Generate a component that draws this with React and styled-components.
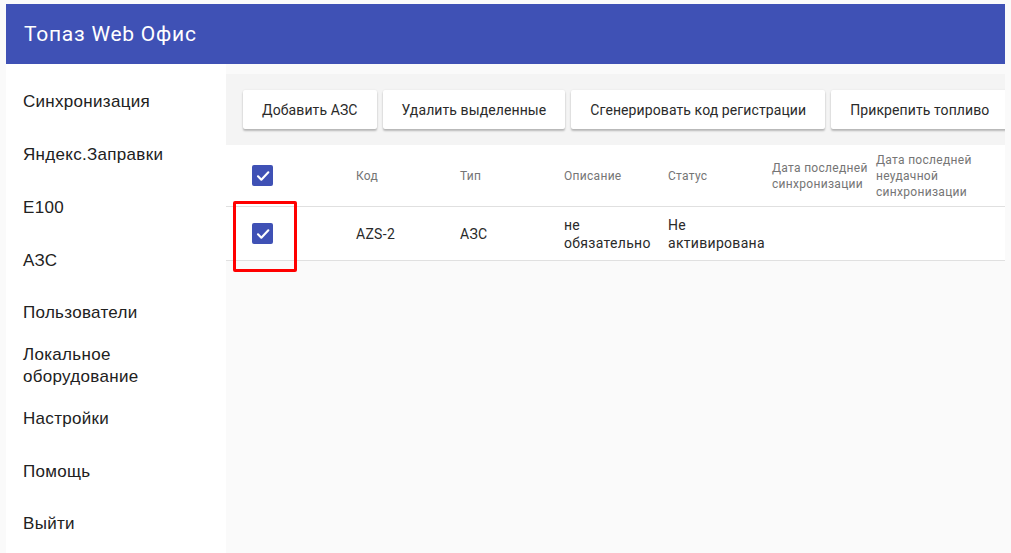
import React from "react";
import styled, { createGlobalStyle } from "styled-components";

const GlobalStyle = createGlobalStyle`
  html, body {
    margin: 0;
    padding: 0;
    background: #fafafa;
    font-family: Roboto, "Liberation Sans", sans-serif;
  }
  * { box-sizing: border-box; }
`;

const Page = styled.div`
  height: 553px;
  padding: 4px 6px 0;
  display: flex;
  flex-direction: column;
  overflow: hidden;
`;

const Header = styled.header`
  height: 60px;
  flex-shrink: 0;
  background: #3f51b5;
  color: #fff;
  display: flex;
  align-items: center;
  padding-left: 18px;
  font-size: 21px;
  letter-spacing: 0.75px;
  font-family: Roboto, sans-serif;
`;

const Body = styled.div`
  flex: 1;
  display: flex;
  min-height: 0;
`;

const Sidebar = styled.nav`
  width: 220px;
  flex-shrink: 0;
  background: #fff;
  padding-top: 12px;
`;

const NavItem = styled.div`
  height: 52.75px;
  display: flex;
  align-items: center;
  padding-left: 17px;
  font-family: "Liberation Sans", Arial, sans-serif;
  font-size: 17px;
  letter-spacing: 0.3px;
  line-height: 22px;
  color: #212121;
  white-space: pre-line;
`;

const Main = styled.main`
  flex: 1;
  padding-top: 10px;
  position: relative;
`;

const Toolbar = styled.div`
  background: #f4f4f4;
  height: 71px;
  padding: 16px 0 0 17px;
  display: flex;
  gap: 6px;
  overflow: hidden;
`;

const Button = styled.button`
  height: 39px;
  flex-shrink: 0;
  padding: 0 19px;
  background: #fff;
  border: none;
  border-radius: 2px;
  box-shadow: 0 2px 2px rgba(0, 0, 0, 0.24), 0 0 2px rgba(0, 0, 0, 0.08);
  font-family: Roboto, sans-serif;
  font-size: 14px;
  letter-spacing: 0.1px;
  color: #2a2a2a;
`;

const Table = styled.div`
  background: #fff;
`;

const Row = styled.div`
  display: grid;
  grid-template-columns: 130px repeat(6, 104px) 1fr;
  align-items: center;
  height: ${(p) => p.$h}px;
  border-bottom: 1px solid #e0e0e0;
`;

const HeadCell = styled.div`
  font-size: 12px;
  line-height: 16px;
  letter-spacing: 0.3px;
  color: #757575;
  padding-right: 2px;
`;

const Cell = styled.div`
  font-size: 14px;
  line-height: 18px;
  letter-spacing: 0.3px;
  color: #2a2a2a;
  padding-right: 8px;
`;

const CheckCell = styled.div`
  padding-left: 26px;
  display: flex;
`;

const Box = styled.div`
  width: 21px;
  height: 21px;
  border-radius: 2px;
  background: #3f51b5;
  display: flex;
  align-items: center;
  justify-content: center;
`;

const Highlight = styled.div`
  position: absolute;
  left: 7px;
  top: 137px;
  width: 64px;
  height: 71px;
  border: 3px solid #ff0000;
  border-radius: 2px;
  pointer-events: none;
`;

const Check = () => (
  <Box>
    <svg width="16" height="16" viewBox="0 0 24 24">
      <path
        d="M4.5 12.5l5 5L20 6.5"
        fill="none"
        stroke="#fff"
        strokeWidth="3.2"
        strokeLinecap="round"
        strokeLinejoin="round"
      />
    </svg>
  </Box>
);

const navItems = [
  "Синхронизация",
  "Яндекс.Заправки",
  "Е100",
  "АЗС",
  "Пользователи",
  "Локальное\nоборудование",
  "Настройки",
  "Помощь",
  "Выйти",
];

const buttons = [
  "Добавить АЗС",
  "Удалить выделенные",
  "Сгенерировать код регистрации",
  "Прикрепить топливо",
];

const heads = [
  "Код",
  "Тип",
  "Описание",
  "Статус",
  "Дата последней синхронизации",
  "Дата последней неудачной синхронизации",
];

const App = () => {
  return (
    <>
      <GlobalStyle />
      <Page>
        <Header>Топаз Web Офис</Header>
        <Body>
          <Sidebar>
            {navItems.map((n) => (
              <NavItem key={n}>{n}</NavItem>
            ))}
          </Sidebar>
          <Main>
            <Toolbar>
              {buttons.map((b) => (
                <Button key={b}>{b}</Button>
              ))}
            </Toolbar>
            <Table>
              <Row $h={62}>
                <CheckCell>
                  <Check />
                </CheckCell>
                {heads.map((h) => (
                  <HeadCell key={h}>{h}</HeadCell>
                ))}
              </Row>
              <Row $h={54}>
                <CheckCell>
                  <Check />
                </CheckCell>
                <Cell>AZS-2</Cell>
                <Cell>АЗС</Cell>
                <Cell>не обязательно</Cell>
                <Cell>Не активирована</Cell>
                <Cell />
                <Cell />
              </Row>
            </Table>
            <Highlight />
          </Main>
        </Body>
      </Page>
    </>
  );
};

export default App;
